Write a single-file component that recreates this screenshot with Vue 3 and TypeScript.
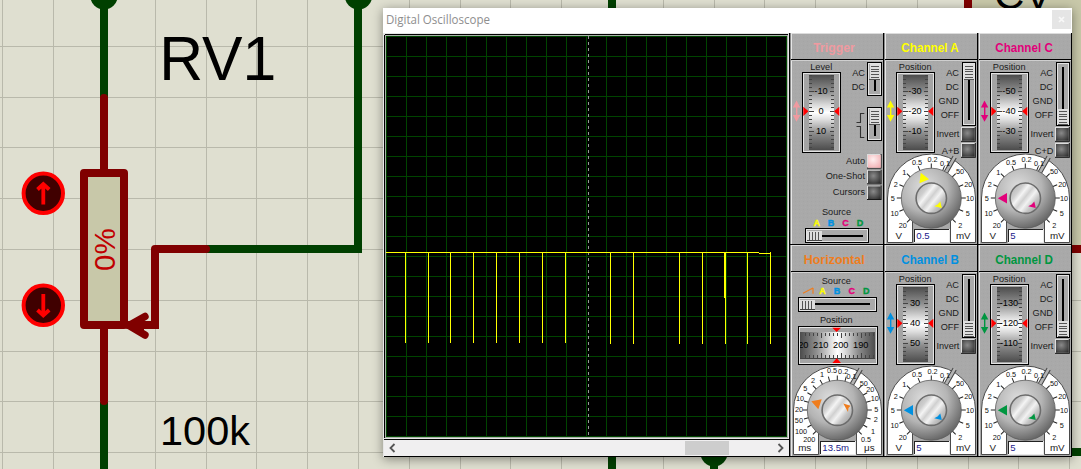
<script setup lang="ts">
interface Label { t: string; x: number; y: number }
interface Panel {
  id: string
  title: string
  titleX: number
  titleWidth: number
  color: string
  kind: 'trigger' | 'channel' | 'horizontal'
  wheel: string[]
  handleY?: number
  sum?: string
  value?: string
  angle?: number
}

const panels: Panel[] = [
  { id: 'trig', title: 'Trigger', titleX: 23.3, titleWidth: 41.5, color: '#ef9aa0', kind: 'trigger', wheel: ['-10', '0', '10'] },
  { id: 'a', title: 'Channel A', titleX: 17.3, titleWidth: 57.5, color: '#ffff00', kind: 'channel', wheel: ['-30', '-20', '-10'], handleY: 31, sum: 'A+B', value: '0.5', angle: 67.5 },
  { id: 'c', title: 'Channel C', titleX: 17.3, titleWidth: 57.5, color: '#e2007a', kind: 'channel', wheel: ['-50', '-40', '-30'], handleY: 76, sum: 'C+D', value: '5', angle: 0 },
  { id: 'hor', title: 'Horizontal', titleX: 13.7, titleWidth: 61, color: '#ef7d1e', kind: 'horizontal', wheel: ['220', '210', '200', '190'], value: '13.5m', angle: 19 },
  { id: 'b', title: 'Channel B', titleX: 17.3, titleWidth: 57.5, color: '#0090e0', kind: 'channel', wheel: ['30', '40', '50'], handleY: 76, value: '5', angle: 0 },
  { id: 'd', title: 'Channel D', titleX: 17.3, titleWidth: 57.5, color: '#009640', kind: 'channel', wheel: ['-130', '-120', '-110'], handleY: 76, value: '5', angle: 0 },
]

const sources = [
  { t: 'A', c: '#ffff00' },
  { t: 'B', c: '#0090e0' },
  { t: 'C', c: '#e2007a' },
  { t: 'D', c: '#009640' },
]

const channelLabels: Label[] = [
  { t: '0.5', x: 33, y: 129.5 }, { t: '0.2', x: 48.5, y: 126.7 }, { t: '0.1', x: 61, y: 130 },
  { t: '1', x: 20.3, y: 139 }, { t: '2', x: 11.7, y: 151.5 }, { t: '5', x: 8.7, y: 165.5 },
  { t: '10', x: 10.5, y: 180.3 }, { t: '20', x: 18.7, y: 192.3 }, { t: '50', x: 76, y: 138.8 },
  { t: '20', x: 84.3, y: 151.5 }, { t: '10', x: 86, y: 165.5 }, { t: '5', x: 83.7, y: 180.3 },
  { t: '2', x: 76.2, y: 192 },
]
const timeLabels: Label[] = [
  { t: '0.5', x: 42, y: 125.5 }, { t: '0.2', x: 53.2, y: 126 }, { t: '0.1', x: 61.5, y: 131 },
  { t: '1', x: 32, y: 129.5 }, { t: '2', x: 23, y: 135.7 }, { t: '5', x: 15.3, y: 143.7 },
  { t: '10', x: 10, y: 153.3 }, { t: '20', x: 9, y: 164 }, { t: '50', x: 8.9, y: 175.5 },
  { t: '100', x: 11, y: 186 }, { t: '200', x: 19.3, y: 194.8 }, { t: '50', x: 73.7, y: 138 },
  { t: '20', x: 80.3, y: 144 }, { t: '10', x: 84.8, y: 153.5 }, { t: '5', x: 86.3, y: 164.3 },
  { t: '2', x: 85.7, y: 174.5 }, { t: '1', x: 83, y: 186.2 }, { t: '0.5', x: 76, y: 194.6 },
]

const channelTicks = [-135, -112.5, -90, -67.5, -45, -22.5, 0, 22.5, 45, 67.5, 90, 112.5, 135]
const timeTicks = Array.from({ length: 19 }, (_, i) => -135 + i * 15).filter((a) => a !== 30)

const wheelTicks = Array.from({ length: 19 }, (_, i) => 42 + i * 4)
const rowTicks = Array.from({ length: 18 }, (_, i) => 14.5 + i * 4)

const gridX = [2, 53, 104, 155, 206, 256, 307, 358, 409, 460, 510, 561, 612, 663, 714, 764, 815, 866, 917, 968, 1018, 1069]
const gridY = [46, 97, 147, 198, 249, 300, 351, 401, 452]

const spikes = [
  ...[19, 42, 64, 87, 110, 133, 156, 179].map((x) => ({ x, h: 91 })),
  ...[224, 247, 293, 316, 339, 361, 384].map((x) => ({ x, h: 92 })),
]
const cells = Array.from({ length: 21 }, (_, i) => i * 20)
</script>

<template>
  <main class="desk">
    <svg class="schematic" width="1081" height="469" viewBox="0 0 1081 469">
      <g fill="#b9b9ab" shape-rendering="crispEdges">
        <rect v-for="x in gridX" :key="'x' + x" :x="x" y="0" width="1" height="469" />
        <rect v-for="y in gridY" :key="'y' + y" x="0" :y="y" width="1081" height="1" />
      </g>
      <rect x="968" y="-10" width="130" height="259" fill="#c8c8a9" stroke="#800000" stroke-width="8" />
      <g fill="none" stroke="#004000" stroke-width="8">
        <path d="M104 0V98M104 402V469M358 0V249H206M612 0V469M714 455V469M1060 452H1081" />
      </g>
      <g fill="#004000">
        <circle cx="104" cy="-4.2" r="13.7" />
        <circle cx="358.5" cy="-4.2" r="13.7" />
        <circle cx="714" cy="453" r="13.5" />
      </g>
      <g fill="none" stroke="#800000" stroke-width="8" stroke-linecap="round" stroke-linejoin="round">
        <path d="M104 98V173M104 325V401M206 249H155V325H128" />
        <path d="M145 316.5L129 325.5L145 335" stroke-width="7.4" />
        <rect x="84" y="173" width="40" height="152" fill="#c8c8a9" />
      </g>
      <path d="M155 320V325H130" fill="none" stroke="#800000" stroke-width="8" />
      <path d="M128 325L144 316V334Z" fill="#800000" />
      <g v-for="(cy, i) in [193.3, 305.3]" :key="cy">
        <circle cx="43.3" :cy="cy" r="19.7" fill="#400000" stroke="#ff0000" stroke-width="4" />
        <path
          :d="i === 0 ? `M43.3 204.5V184M37.5 189.5L43.3 184L49.2 189.5` : `M43.3 294V315M37.5 310L43.3 315.5L49.2 310`"
          fill="none" stroke="#ff0000" stroke-width="3.8"
        />
      </g>
      <g class="arial">
        <text x="159.3" y="80" font-size="63" textLength="117" lengthAdjust="spacingAndGlyphs">RV1</text>
        <text x="160" y="445" font-size="41.5">100k</text>
        <text x="994" y="8.5" font-size="42">CV</text>
        <text transform="translate(115 271) rotate(-90)" font-size="29.5" fill="#c00000">0%</text>
      </g>
    </svg>

    <section class="window">
      <header class="titlebar">
        <svg class="caption" width="120" height="25">
          <text x="3" y="16" font-size="12" textLength="104" lengthAdjust="spacingAndGlyphs" fill="#8e8e8e">Digital Oscilloscope</text>
        </svg>
        <button class="close" type="button">
          <svg width="19" height="19"><path d="M7 7L12 12M12 7L7 12" stroke="#f8f8f8" stroke-width="1.7" /></svg>
        </button>
      </header>

      <div class="body">
        <div class="scope">
          <svg class="screen" width="401" height="401" shape-rendering="crispEdges">
            <g fill="#004400">
              <rect v-for="c in cells" :key="'v' + c" :x="c" y="0" width="1" height="401" />
              <rect v-for="c in cells" :key="'h' + c" x="0" :y="c" width="401" height="1" />
            </g>
            <path d="M202.5 0V401" stroke="#999" stroke-dasharray="3 3" />
            <g fill="#ffff00">
              <rect x="0" y="216" width="373" height="1" />
              <rect x="373" y="217" width="12" height="1" />
              <rect v-for="s in spikes" :key="s.x" :x="s.x" y="216" width="1" :height="s.h" />
              <rect x="338" y="216" width="1" height="46" />
            </g>
          </svg>
          <div class="scrollbar">
            <svg class="chev" width="16" height="14"><path d="M10.5 3L6.5 7L10.5 11" /></svg>
            <div class="track"><div class="thumb"></div></div>
            <svg class="chev" width="16" height="14"><path d="M5.5 3L9.5 7L5.5 11" /></svg>
          </div>
        </div>

        <div class="panels">
          <svg v-for="p in panels" :key="p.id" class="panel arial" width="94" height="212" viewBox="0 0 94 212">
            <defs>
              <pattern :id="'n' + p.id" width="4" height="4" patternUnits="userSpaceOnUse">
                <rect width="4" height="4" fill="#a9a9a9" />
                <rect x="1" y="0" width="1" height="1" fill="#a5a5a5" />
                <rect x="3" y="2" width="1" height="1" fill="#acacac" />
              </pattern>
              <linearGradient :id="'w' + p.id" x1="0" y1="0" :x2="p.kind === 'horizontal' ? 1 : 0" :y2="p.kind === 'horizontal' ? 0 : 1">
                <stop offset="0" stop-color="#4c4c4c" />
                <stop offset="0.22" stop-color="#8f8f8f" />
                <stop offset="0.4" stop-color="#dadada" />
                <stop offset="0.5" stop-color="#ffffff" />
                <stop offset="0.6" stop-color="#dcdcdc" />
                <stop offset="0.78" stop-color="#8c8c8c" />
                <stop offset="1" stop-color="#4c4c4c" />
              </linearGradient>
              <radialGradient :id="'k' + p.id" cx="0.38" cy="0.32" r="0.72">
                <stop offset="0" stop-color="#dedede" />
                <stop offset="0.55" stop-color="#b4b4b4" />
                <stop offset="1" stop-color="#626262" />
              </radialGradient>
              <linearGradient :id="'i' + p.id" x1="0" y1="0.1" x2="1" y2="0.9">
                <stop offset="0" stop-color="#b0b0b0" />
                <stop offset="0.25" stop-color="#cfcfcf" />
                <stop offset="0.36" stop-color="#f4f4f4" />
                <stop offset="0.48" stop-color="#d0d0d0" />
                <stop offset="0.6" stop-color="#f2f2f2" />
                <stop offset="0.75" stop-color="#c4c4c4" />
                <stop offset="1" stop-color="#989898" />
              </linearGradient>
              <radialGradient :id="'b' + p.id" cx="0.42" cy="0.4" r="0.75">
                <stop offset="0" stop-color="#8a8a8a" />
                <stop offset="1" stop-color="#2c2c2c" />
              </radialGradient>
              <radialGradient :id="'p' + p.id" cx="0.4" cy="0.35" r="0.8">
                <stop offset="0" stop-color="#fff0f0" />
                <stop offset="1" stop-color="#f2acb0" />
              </radialGradient>
              <clipPath :id="'c' + p.id"><rect x="10" y="87" width="75" height="26" /></clipPath>
            </defs>

            <g shape-rendering="crispEdges">
              <rect width="94" height="212" :fill="`url(#n${p.id})`" />
              <rect x="0" y="0" width="94" height="1" fill="#dcdcdc" />
              <rect x="1" y="0" width="1" height="212" fill="#e6e6e6" />
              <rect x="0" y="0" width="1" height="212" fill="#8a8a8a" />
              <rect x="1" y="26" width="93" height="1" fill="#000" />
              <rect x="1" y="27" width="93" height="1" fill="#cfcfcf" />
              <rect x="0" y="211" width="94" height="1" fill="#000" />
              <rect x="93" y="0" width="1" height="212" fill="#000" />
            </g>
            <text
              :x="p.titleX" y="19.2" font-size="13" font-weight="bold" :fill="p.color"
              :textLength="p.titleWidth" lengthAdjust="spacingAndGlyphs"
            >{{ p.title }}</text>

            <!-- vertical thumb wheel -->
            <template v-if="p.kind !== 'horizontal'">
              <text x="31.2" y="36.7" class="mid lbl">{{ p.kind === 'trigger' ? 'Level' : 'Position' }}</text>
              <g shape-rendering="crispEdges">
                <rect x="12.5" y="39.5" width="38" height="80" fill="none" stroke="#000" />
                <rect x="13.5" y="40.5" width="36" height="78" fill="#a4a4a4" stroke="#e4e4e4" />
                <rect x="19" y="42" width="25" height="75" :fill="`url(#w${p.id})`" />
                <g fill="#444">
                  <rect v-for="(y, n) in wheelTicks" :key="y" x="19" :y="y" :width="n % 5 === 4 ? 5 : 3" height="1" />
                  <rect v-for="(y, n) in wheelTicks" :key="'r' + y" :x="n % 5 === 4 ? 40 : 41" :y="y" :width="n % 5 === 4 ? 4 : 3" height="1" />
                </g>
              </g>
              <text v-for="(w, n) in p.wheel" :key="w" x="31" :y="61 + n * 20" class="mid num">{{ w }}</text>
              <path d="M13.3 73.7L18.5 78.3L13.3 83ZM49.3 73.7L44 78.3L49.3 83Z" fill="#ff0000" />
              <g :fill="p.color">
                <path d="M6.5 67.5L10.3 74.5H2.9ZM6.5 88.7L10.3 82H2.9Z" />
                <rect x="6" y="73" width="1.4" height="10" />
              </g>
            </template>

            <template v-if="p.kind === 'trigger'">
              <g v-for="s in [{ y: 29, h: 33 }, { y: 74, h: 33 }]" :key="s.y" shape-rendering="crispEdges">
                <rect x="77.5" :y="s.y + 0.5" width="14" :height="s.h" fill="#a9a9a9" stroke="#000" />
                <rect x="78.5" :y="s.y + 1.5" width="12" :height="s.h - 2" fill="none" stroke="#e4e4e4" />
                <rect x="84" :y="s.y + 15" width="2" height="14" fill="#000" />
                <rect x="80" :y="s.y + 2" width="10" height="15" fill="#dedede" />
                <rect v-for="k in 5" :key="k" x="81" :y="s.y + 1 + k * 2.8" width="8" height="1" fill="#555" />
                <rect x="79" :y="s.y + 17" width="11" height="1" fill="#555" />
              </g>
              <text x="75" y="42.7" class="end lbl">AC</text>
              <text x="75" y="57" class="end lbl">DC</text>
              <path d="M66.5 89.5H70.5V80.5H74.3M66.5 93.5H70.5V104.5H74.3" fill="none" stroke="#333" stroke-width="1.1" />
              <template v-for="(b, n) in ['Auto', 'One-Shot', 'Cursors']" :key="b">
                <text x="75" :y="[130.7, 146, 161.7][n]" class="end lbl">{{ b }}</text>
                <rect x="77" :y="121 + n * 15.7" width="14.6" height="14.6" fill="#111" />
                <rect x="77" :y="121 + n * 15.7" width="13.6" height="13.6" fill="#ddd" />
                <rect x="78" :y="122 + n * 15.7" width="12.8" height="12.8" :fill="n === 0 ? `url(#p${p.id})` : `url(#b${p.id})`" />
              </template>
              <text x="46.5" y="181.7" class="mid lbl">Source</text>
              <text v-for="(s, n) in sources" :key="s.t" :x="26.7 + n * 14.4" y="192.5" class="mid src" :fill="s.c" :stroke="s.c">{{ s.t }}</text>
              <g shape-rendering="crispEdges">
                <rect x="15.5" y="195.5" width="63" height="14" fill="#a9a9a9" stroke="#000" />
                <rect x="16.5" y="196.5" width="61" height="12" fill="none" stroke="#e4e4e4" />
                <rect x="31" y="202" width="42" height="2" fill="#000" />
                <rect x="17" y="198" width="15" height="9" fill="#dedede" />
                <rect v-for="k in 4" :key="k" :x="16 + k * 3" y="199" width="1" height="8" fill="#555" />
                <rect x="17" y="207" width="15" height="1" fill="#444" />
              </g>
            </template>

            <template v-if="p.kind === 'channel'">
              <g shape-rendering="crispEdges">
                <rect x="78.5" y="29.5" width="13" height="63" fill="#a9a9a9" stroke="#000" />
                <rect x="79.5" y="30.5" width="11" height="61" fill="none" stroke="#e4e4e4" />
                <rect x="84" y="34" width="2" height="53" fill="#000" />
                <rect x="80" :y="p.handleY" width="10" height="15" fill="#dedede" />
                <rect v-for="k in 5" :key="k" x="81" :y="p.handleY! - 1 + k * 2.8" width="8" height="1" fill="#555" />
                <rect x="80" :y="p.handleY! + 15" width="10" height="1" fill="#555" />
              </g>
              <text x="75" y="42.7" class="end lbl">AC</text>
              <text x="75" y="57" class="end lbl">DC</text>
              <text x="75" y="71" class="end lbl">GND</text>
              <text x="75" y="84.8" class="end lbl">OFF</text>
              <template v-for="(b, n) in p.sum ? ['Invert', p.sum] : ['Invert']" :key="b">
                <text x="75.4" :y="104 + n * 17" class="end lbl">{{ b }}</text>
                <rect x="77" :y="94 + n * 16" width="14.8" height="14.8" fill="#111" />
                <rect x="77" :y="94 + n * 16" width="13.8" height="13.8" fill="#ddd" />
                <rect x="78" :y="95 + n * 16" width="12.8" height="12.8" :fill="`url(#b${p.id})`" />
              </template>
            </template>

            <template v-if="p.kind === 'horizontal'">
              <text x="46.3" y="39.3" class="mid lbl">Source</text>
              <path d="M13 48.3L23 43V48.8" fill="none" :stroke="p.color" stroke-width="1.2" stroke-linejoin="bevel" />
              <text v-for="(s, n) in sources" :key="s.t" :x="32.5 + n * 14.6" y="48.8" class="mid src" :fill="s.c" :stroke="s.c">{{ s.t }}</text>
              <g shape-rendering="crispEdges">
                <rect x="8.5" y="52.5" width="78" height="14" fill="#a9a9a9" stroke="#000" />
                <rect x="9.5" y="53.5" width="76" height="12" fill="none" stroke="#e4e4e4" />
                <rect x="24" y="58" width="56" height="2" fill="#000" />
                <rect x="10" y="55" width="15" height="9" fill="#dedede" />
                <rect v-for="k in 4" :key="k" :x="9 + k * 3" y="56" width="1" height="8" fill="#555" />
                <rect x="10" y="64" width="15" height="1" fill="#444" />
              </g>
              <text x="46.3" y="77.7" class="mid lbl">Position</text>
              <g shape-rendering="crispEdges">
                <rect x="8.5" y="81.5" width="79" height="38" fill="none" stroke="#000" />
                <rect x="9.5" y="82.5" width="77" height="36" fill="#a4a4a4" stroke="#e4e4e4" />
                <rect x="10" y="87" width="75" height="26" :fill="`url(#w${p.id})`" />
                <g fill="#444">
                  <rect v-for="(x, n) in rowTicks" :key="x" :x="x" y="88" width="1" :height="n % 5 === 4 ? 5 : 3" />
                  <rect v-for="(x, n) in rowTicks" :key="'l' + x" :x="x" :y="n % 5 === 4 ? 108 : 110" width="1" :height="n % 5 === 4 ? 5 : 3" />
                  <rect x="10" y="113" width="75" height="1" />
                </g>
              </g>
              <g :clip-path="`url(#c${p.id})`">
                <text v-for="(w, n) in p.wheel" :key="w" :x="10.7 + n * 20" y="103" class="mid num">{{ w }}</text>
              </g>
              <path d="M42.3 82.7H51L46.7 87ZM42.3 118H51L46.7 113.3Z" fill="#ff0000" />
            </template>

            <!-- rotary control -->
            <template v-if="p.kind !== 'trigger'">
              <path
                d="M3.5 209.5V165A43.9 43.9 0 0 1 91.5 165V209.5H66.5V187H28.5V209.5Z"
                fill="#fff" stroke="#4a4a4a" stroke-width="1"
              />
              <rect x="29" y="186" width="37" height="25" fill="#a9a9a9" />
              <path d="M61.5 140L70.7 124" stroke="#444" stroke-width="4.6" />
              <path d="M61.5 140L71 123.4" stroke="#b4b4b4" stroke-width="2.6" />
              <g stroke="#222" stroke-width="1">
                <path
                  v-for="a in p.kind === 'horizontal' ? timeTicks : channelTicks" :key="a"
                  d="M47.3 130.5V137" :transform="`rotate(${a} 47.3 165)`"
                />
              </g>
              <text
                v-for="(l, n) in p.kind === 'horizontal' ? timeLabels : channelLabels" :key="n"
                :x="l.x" :y="l.y + 2.6" class="mid tiny"
              >{{ l.t }}</text>
              <circle cx="47.3" cy="165.2" r="30" :fill="`url(#k${p.id})`" stroke="#5c5c5c" stroke-width="0.8" />
              <circle cx="47.3" cy="165.2" r="15.2" :fill="`url(#i${p.id})`" stroke="#6c6c6c" stroke-width="1.6" />
              <path d="M19.8 165.2L29 160V170.4Z" :fill="p.color" :transform="`rotate(${p.angle} 47.3 165.2)`" />
              <path :d="p.kind === 'horizontal' ? 'M53.3 158.6L60.6 160.8L58.5 163L58 167Z' : 'M56.3 168.4L57.8 175L50.2 173.2L53.6 171.6Z'" :fill="p.color" />
              <text x="14.7" y="206.3" class="mid unit">{{ p.kind === 'horizontal' ? 'ms' : 'V' }}</text>
              <text x="79.3" y="206.3" class="mid unit">{{ p.kind === 'horizontal' ? 'μs' : 'mV' }}</text>
              <g shape-rendering="crispEdges">
                <rect x="30" y="196" width="36" height="14" fill="#e8e8e8" />
                <rect x="30" y="196" width="35" height="13" fill="#222" />
                <rect x="31" y="197" width="34" height="12" fill="#fff" />
              </g>
              <text x="32.3" y="206" font-size="9.6" fill="#20208a">{{ p.value }}</text>
            </template>
          </svg>
        </div>
      </div>
    </section>
  </main>
</template>

<style>
body {
  margin: 0;
  overflow: hidden;
}
</style>

<style scoped>
.desk {
  position: relative;
  width: 1081px;
  height: 469px;
  overflow: hidden;
  background: #dfdfd0;
}
.schematic {
  display: block;
}
.arial {
  font-family: "Liberation Sans", Arial, sans-serif;
}
.window {
  position: absolute;
  left: 383px;
  top: 8px;
  width: 689px;
  height: 449px;
  background: #fff;
  box-shadow: 0 2px 10px rgba(0, 0, 0, 0.42);
}
.titlebar {
  display: flex;
  justify-content: space-between;
  height: 25px;
  background: #fff;
}
.caption {
  font-family: "Open Sans", "Noto Sans", sans-serif;
}
.close {
  width: 19px;
  height: 19px;
  margin: 2px 1px 0 0;
  padding: 0;
  border: 0;
  background: #e5e5e5;
}
.close svg {
  display: block;
}
.body {
  display: flex;
  height: 424px;
}
.scope {
  box-sizing: border-box;
  width: 407px;
  height: 424px;
  padding: 1px 0 0 1px;
  background: #e6e6e6;
  border-right: 1px solid #000;
}
.screen {
  display: block;
  background: #000;
  border: 1px solid #a8b0a8;
  box-shadow: 0 -1px #000, -1px 0 #000;
  margin: 1px 0 0 1px;
}
.scrollbar {
  box-sizing: border-box;
  display: flex;
  align-items: center;
  height: 18px;
  margin-top: 1px;
  border-top: 1px solid #000;
  border-bottom: 1px solid #000;
  background: #f0eff0;
}
.track {
  flex: 1;
}
.thumb {
  width: 44px;
  height: 14px;
  margin-left: 285px;
  background: #cdcdcd;
}
.chev {
  fill: none;
  stroke: #555;
  stroke-width: 1.8;
}
.panels {
  display: grid;
  grid-template-columns: repeat(3, 94px);
  grid-template-rows: repeat(2, 212px);
}
.panel {
  display: block;
}
.mid {
  text-anchor: middle;
}
.end {
  text-anchor: end;
}
.lbl {
  font-size: 9.2px;
  fill: #1c1c1c;
}
.num {
  font-size: 9.2px;
  fill: #000;
}
.src {
  font-size: 9px;
  font-weight: bold;
  stroke-width: 0.35px;
}
.tiny {
  font-size: 7.3px;
  fill: #111;
}
.unit {
  font-size: 9.8px;
  fill: #222;
}
</style>
